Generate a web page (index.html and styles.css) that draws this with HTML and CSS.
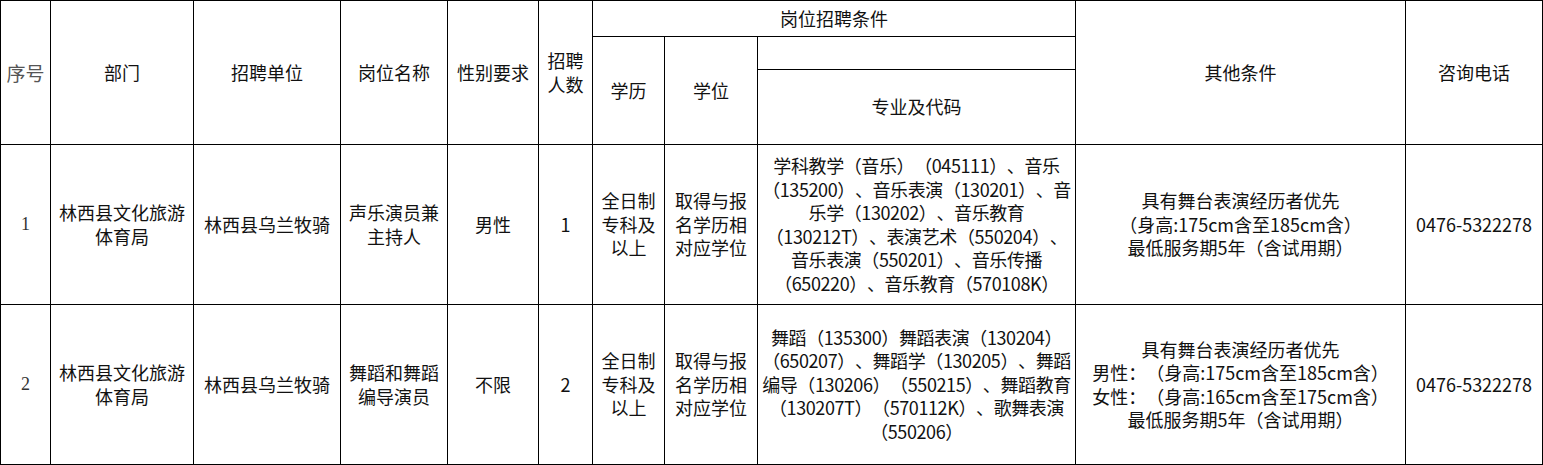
FILE: index.html
```html
<!DOCTYPE html>
<html lang="zh-CN">
<head>
<meta charset="utf-8">
<title>招聘岗位表</title>
<link rel="stylesheet" href="styles.css">
</head>
<body>
<table class="jobs">
  <colgroup>
    <col class="c-no">
    <col class="c-dept">
    <col class="c-unit">
    <col class="c-post">
    <col class="c-sex">
    <col class="c-num">
    <col class="c-edu">
    <col class="c-deg">
    <col class="c-major">
    <col class="c-other">
    <col class="c-tel">
  </colgroup>
  <thead>
    <tr class="h1">
      <th rowspan="3" class="serial">序号</th>
      <th rowspan="3">部门</th>
      <th rowspan="3">招聘单位</th>
      <th rowspan="3">岗位名称</th>
      <th rowspan="3">性别要求</th>
      <th rowspan="3" class="num-head">招聘<br>人数</th>
      <th colspan="3">岗位招聘条件</th>
      <th rowspan="3">其他条件</th>
      <th rowspan="3">咨询电话</th>
    </tr>
    <tr class="h2">
      <th rowspan="2" class="edu-head">学历</th>
      <th rowspan="2" class="edu-head">学位</th>
      <th></th>
    </tr>
    <tr class="h3">
      <th>专业及代码</th>
    </tr>
  </thead>
  <tbody>
    <tr class="row">
      <td class="serial-num">1</td>
      <td>林西县文化旅游<br>体育局</td>
      <td>林西县乌兰牧骑</td>
      <td>声乐演员兼<br>主持人</td>
      <td>男性</td>
      <td>1</td>
      <td>全日制<br>专科及<br>以上</td>
      <td>取得与报<br>名学历相<br>对应学位</td>
      <td class="major">学科教学（音乐）（045111）、音乐<br>（135200）、音乐表演（130201）、音<br>乐学（130202）、音乐教育<br>（130212T）、表演艺术（550204）、<br>音乐表演（550201）、音乐传播<br>（650220）、音乐教育（570108K）</td>
      <td class="other">具有舞台表演经历者优先<br>（身高:175cm含至185cm含）<br>最低服务期5年（含试用期）</td>
      <td>0476-5322278</td>
    </tr>
    <tr class="row">
      <td class="serial-num">2</td>
      <td>林西县文化旅游<br>体育局</td>
      <td>林西县乌兰牧骑</td>
      <td>舞蹈和舞蹈<br>编导演员</td>
      <td>不限</td>
      <td>2</td>
      <td>全日制<br>专科及<br>以上</td>
      <td>取得与报<br>名学历相<br>对应学位</td>
      <td class="major">舞蹈（135300）舞蹈表演（130204）<br>（650207）、舞蹈学（130205）、舞蹈<br>编导（130206）（550215）、舞蹈教育<br>（130207T）（570112K）、歌舞表演<br>（550206）</td>
      <td class="other">具有舞台表演经历者优先<br>男性：（身高:175cm含至185cm含）<br>女性：（身高:165cm含至175cm含）<br>最低服务期5年（含试用期）</td>
      <td>0476-5322278</td>
    </tr>
  </tbody>
</table>
</body>
</html>
```
FILE: styles.css
```css
html, body {
  margin: 0;
  padding: 0;
  background: #ffffff;
}

.jobs {
  table-layout: fixed;
  border-collapse: collapse;
  width: 1543px;
  font-family: "Noto Sans CJK SC", "Noto Sans", sans-serif;
  font-size: 18px;
  line-height: 23.5px;
  color: #111;
  text-spacing-trim: space-all;
}

.c-no { width: 50px; }
.c-dept { width: 143px; }
.c-unit { width: 147px; }
.c-post { width: 107px; }
.c-sex { width: 91px; }
.c-num { width: 54px; }
.c-edu { width: 72px; }
.c-deg { width: 93px; }
.c-major { width: 318px; }
.c-other { width: 330px; }
.c-tel { width: 137px; }

.jobs th,
.jobs td {
  border: 1px solid #000;
  padding: 0;
  text-align: center;
  vertical-align: middle;
  font-weight: normal;
  white-space: nowrap;
  overflow: visible;
}

.h1 { height: 36px; }
.h2 { height: 33px; }
.h3 { height: 75px; }
.row { height: 160px; }

.serial {
  font-weight: 300;
  color: #555;
  font-size: 19px;
}

.serial-num {
  font-family: "Liberation Serif", serif;
  color: #333;
}

.major {
  letter-spacing: -0.4px;
}
```
